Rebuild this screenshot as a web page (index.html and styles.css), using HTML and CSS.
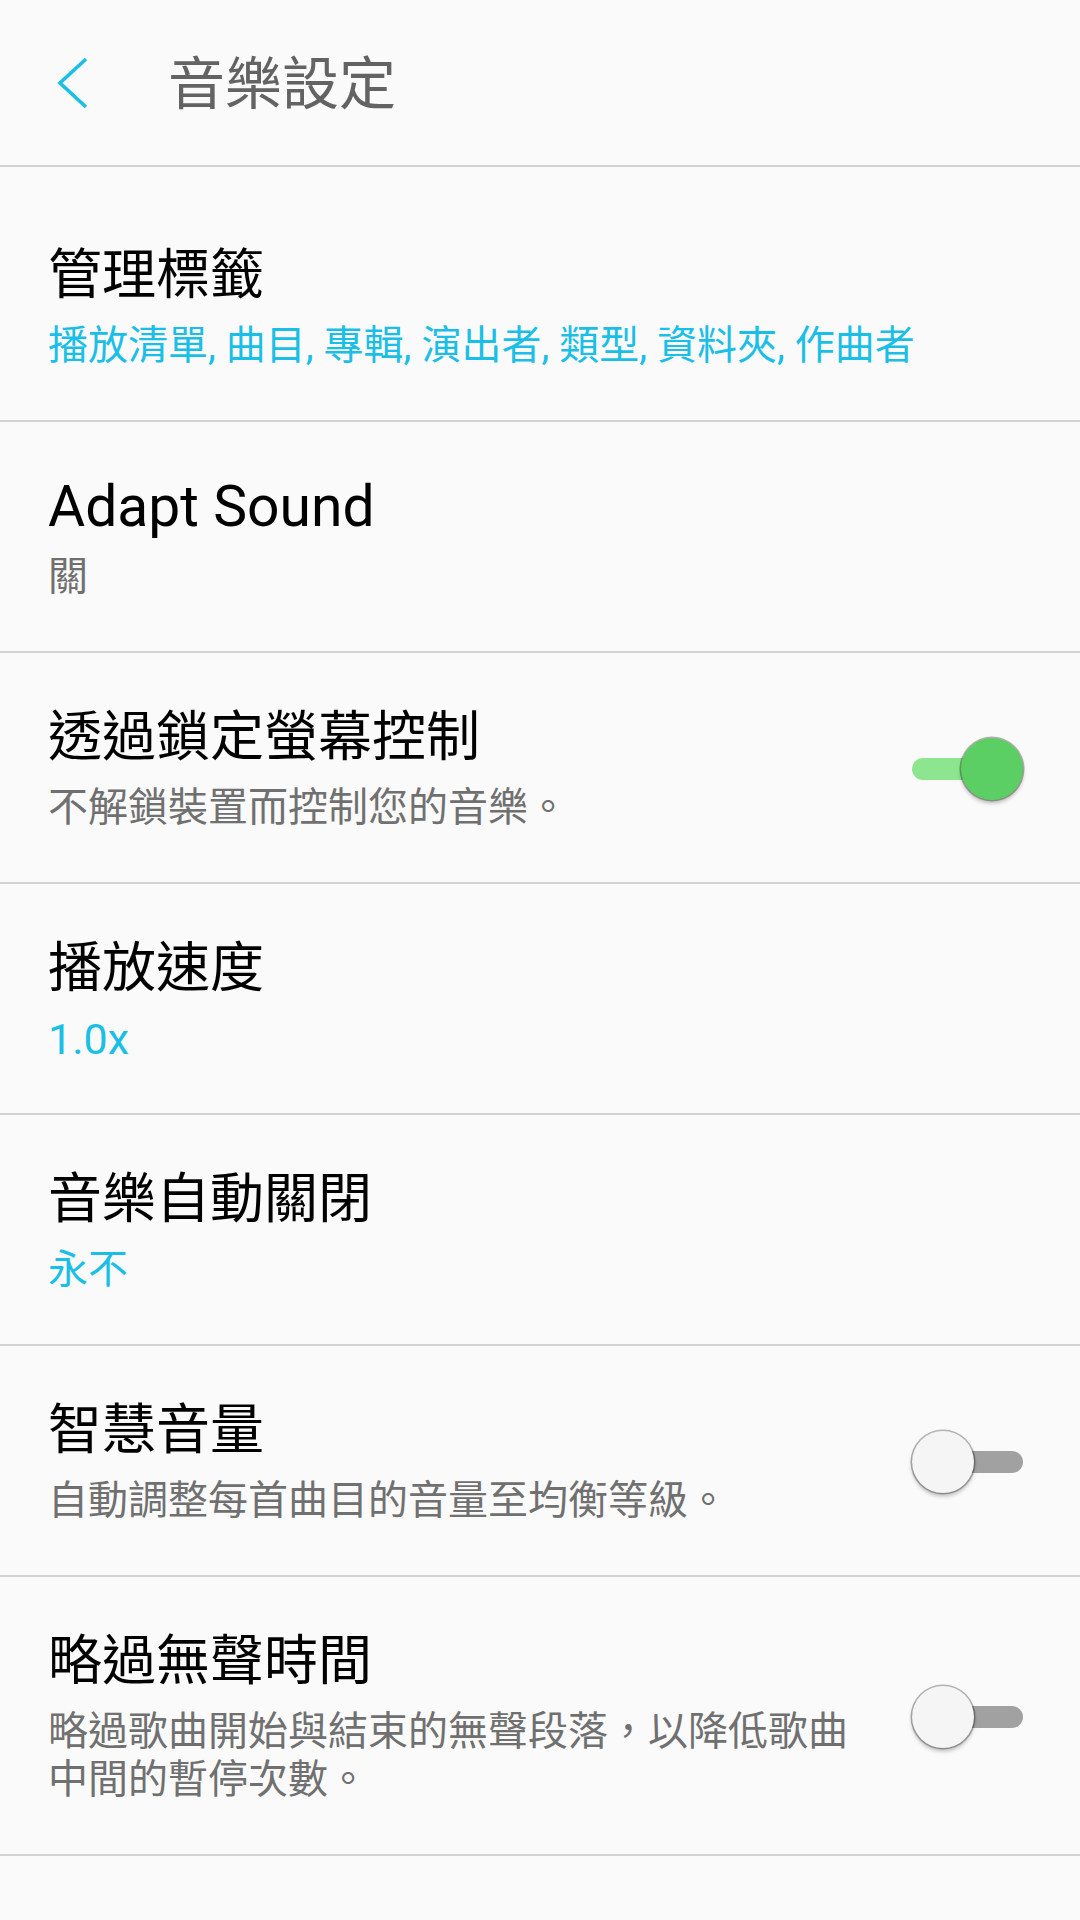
FILE: index.html
```html
<!DOCTYPE html>
<html lang="zh-Hant">
<head>
<meta charset="utf-8">
<title>音樂設定</title>
<link rel="stylesheet" href="styles.css">
</head>
<body>
<header class="appbar">
  <svg class="back" width="32" height="54" viewBox="0 0 32 54" aria-hidden="true">
    <polyline points="29,3 3,27 29,51" fill="none" stroke="#1abfe7" stroke-width="3.6" stroke-linecap="butt" stroke-linejoin="miter"/>
  </svg>
  <h1 class="appbar-title">音樂設定</h1>
</header>
<main class="list">
  <div class="row">
    <div class="text">
      <div class="title">管理標籤</div>
      <div class="sub accent">播放清單, 曲目, 專輯, 演出者, 類型, 資料夾, 作曲者</div>
    </div>
  </div>
  <div class="row">
    <div class="text">
      <div class="title latin">Adapt Sound</div>
      <div class="sub">關</div>
    </div>
  </div>
  <div class="row">
    <div class="text">
      <div class="title">透過鎖定螢幕控制</div>
      <div class="sub">不解鎖裝置而控制您的音樂。</div>
    </div>
    <div class="switch on"><span class="track"></span><span class="thumb"></span></div>
  </div>
  <div class="row">
    <div class="text">
      <div class="title">播放速度</div>
      <div class="sub accent latin">1.0x</div>
    </div>
  </div>
  <div class="row">
    <div class="text">
      <div class="title">音樂自動關閉</div>
      <div class="sub accent">永不</div>
    </div>
  </div>
  <div class="row">
    <div class="text">
      <div class="title">智慧音量</div>
      <div class="sub">自動調整每首曲目的音量至均衡等級。</div>
    </div>
    <div class="switch off"><span class="track"></span><span class="thumb"></span></div>
  </div>
  <div class="row">
    <div class="text">
      <div class="title">略過無聲時間</div>
      <div class="sub">略過歌曲開始與結束的無聲段落，以降低歌曲中間的暫停次數。</div>
    </div>
    <div class="switch off"><span class="track"></span><span class="thumb"></span></div>
  </div>
  <div class="row last">
    <div class="text">
      <div class="title">關於音樂</div>
      <div class="sub">版本資訊</div>
    </div>
  </div>
</main>
</body>
</html>
```
FILE: styles.css
```css
html, body {
  margin: 0;
  padding: 0;
  background: #fafafa;
}
body {
  width: 1080px;
  font-family: Roboto, "Noto Sans CJK TC", "Noto Sans CJK SC", sans-serif;
  color: #000;
  overflow: hidden;
}
.appbar {
  height: 165px;
  display: flex;
  align-items: center;
  padding-left: 57px;
  border-bottom: 2px solid #d2d2d2;
  box-sizing: content-box;
}
.back {
  display: block;
  flex: none;
}
.appbar-title {
  margin: 4px 0 0 79px;
  font-size: 57px;
  font-weight: 400;
  line-height: 64px;
  color: #636363;
}
.list {
  padding-top: 24px;
}
.row {
  display: flex;
  align-items: center;
  gap: 60px;
  padding: 53px 57px 50px 48px;
  border-bottom: 2px solid #d2d2d2;
}
.row.last {
  padding-top: 68px;
}
.text {
  flex: 1;
  min-width: 0;
}
.title {
  font-size: 54px;
  line-height: 64px;
}
.title.latin {
  font-size: 57px;
}
.sub {
  margin-top: 14px;
  font-size: 40px;
  line-height: 48px;
  color: #707070;
}
.sub.latin {
  font-size: 43px;
}
.accent {
  color: #1abfe7;
}
.switch {
  position: relative;
  flex: none;
  width: 111px;
  height: 62px;
}
.track {
  position: absolute;
  left: 0;
  right: 0;
  top: 20px;
  height: 22px;
  border-radius: 11px;
}
.thumb {
  position: absolute;
  top: 0;
  width: 62px;
  height: 62px;
  border-radius: 50%;
  box-shadow: 0 0 0 1.5px rgba(0, 0, 0, 0.28), 0 3px 4px rgba(0, 0, 0, 0.28);
}
.switch.on .track {
  background: #8de68f;
}
.switch.on .thumb {
  right: 0;
  background: #5bcf63;
}
.switch.off .track {
  background: #a1a1a1;
}
.switch.off .thumb {
  left: 0;
  background: #f5f5f5;
}
```
